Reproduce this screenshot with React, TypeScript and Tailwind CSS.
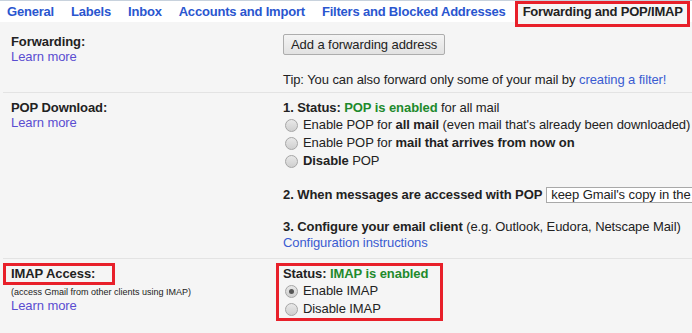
function Radio({ checked = false }: { checked?: boolean }) {
  return (
    <span className="relative mr-[5px] inline-block h-[13px] w-[13px] shrink-0 rounded-full border border-[#a6a6a6] bg-gradient-to-b from-[#e8e8e8] to-[#cfcfcf]">
      {checked && (
        <span className="absolute left-[3px] top-[3px] h-[5px] w-[5px] rounded-full bg-[#555555]" />
      )}
    </span>
  )
}

function LearnMore() {
  return <div className="h-[15px] leading-[15px] text-[#5a4dd1]">Learn more</div>
}

const tabs = ['General', 'Labels', 'Inbox', 'Accounts and Import', 'Filters and Blocked Addresses']

export default function App() {
  return (
    <div
      className="h-[333px] w-[692px] overflow-hidden bg-[#f5f5f5] text-[13px] tracking-[-0.08px] text-[#222222]"
      style={{ fontFamily: '"Liberation Sans", Arial, sans-serif' }}
    >
      {/* tab bar */}
      <div className="flex h-[22px] items-center border-t border-[#c8d2dd] bg-white tracking-[-0.2px]">
        <div className="ml-[7px] flex items-center gap-[17px] font-bold text-[#2a56cf]">
          {tabs.map((t) => (
            <span key={t} className="whitespace-nowrap">{t}</span>
          ))}
        </div>
        <div className="ml-[9px] box-border flex h-[26px] w-[175px] shrink-0 items-center self-start border-[3px] border-[#e8202a] bg-[#f5f5f5] pb-[5px] pl-[5px] font-bold whitespace-nowrap">
          Forwarding and POP/IMAP
        </div>
      </div>

      {/* forwarding */}
      <div className="ml-[3px] flex border-b border-[#e3e3e3] pt-[12px] pb-[5px]">
        <div className="w-[280px] shrink-0 pl-[8px]">
          <div className="h-[15px] leading-[15px] font-bold">Forwarding:</div>
          <LearnMore />
        </div>
        <div className="whitespace-nowrap">
          <button className="h-[21px] rounded-[2px] border border-[#adadad] bg-gradient-to-b from-[#f4f4f4] to-[#e2e2e2] px-[7px] text-[13px] leading-[19px] tracking-[-0.08px] text-[#222222]">
            Add a forwarding address
          </button>
          <div className="mt-[17px] h-[15px] leading-[15px]">
            Tip: You can also forward only some of your mail by{' '}
            <span className="text-[#3a5bd1]">creating a filter!</span>
          </div>
        </div>
      </div>

      {/* POP */}
      <div className="ml-[3px] flex border-b border-[#e3e3e3] pt-[7px] pb-[7px]">
        <div className="w-[280px] shrink-0 pl-[8px]">
          <div className="h-[15px] leading-[15px] font-bold">POP Download:</div>
          <LearnMore />
        </div>
        <div className="whitespace-nowrap">
          <div className="h-[16px] leading-[15px]">
            <b>1. Status: </b>
            <span className="font-bold text-[#1e8a2c]">POP is enabled</span> for all mail
          </div>
          <div className="flex h-[18px] items-center pl-[2px]">
            <Radio />
            <span>
              Enable POP for <b>all mail</b> (even mail that's already been downloaded)
            </span>
          </div>
          <div className="flex h-[18px] items-center pl-[2px]">
            <Radio />
            <span>
              Enable POP for <b>mail that arrives from now on</b>
            </span>
          </div>
          <div className="flex h-[18px] items-center pl-[2px]">
            <Radio />
            <span>
              <b>Disable</b> POP
            </span>
          </div>
          <div className="mt-[16px] flex h-[18px] items-center">
            <b>2. When messages are accessed with POP</b>
            <span className="ml-[4px] inline-block h-[16px] w-[160px] border border-[#a9a9a9] bg-white pl-[4px] leading-[14px]">
              keep Gmail's copy in the Inbox
            </span>
          </div>
          <div className="mt-[15px] h-[16px] leading-[16px]">
            <b>3. Configure your email client</b> (e.g. Outlook, Eudora, Netscape Mail)
          </div>
          <div className="h-[16px] leading-[16px] text-[#3a5bd1]">Configuration instructions</div>
        </div>
      </div>

      {/* IMAP */}
      <div className="ml-[3px] flex pt-[4px]">
        <div className="w-[280px] shrink-0">
          <div className="box-border flex h-[22px] w-[112px] items-center border-[3px] border-[#e8202a] pl-[5px] font-bold">
            IMAP Access:
          </div>
          <div className="mt-[2px] h-[11px] pl-[8px] text-[9px] leading-[11px] tracking-normal">
            (access Gmail from other clients using IMAP)
          </div>
          <div className="pl-[8px]">
            <LearnMore />
          </div>
        </div>
        <div className="-ml-[7px] box-border h-[58px] w-[167px] border-[3px] border-[#e8202a] pl-[4px] whitespace-nowrap">
          <div className="h-[16px] leading-[16px]">
            <b>Status: </b>
            <span className="font-bold text-[#1e8a2c]">IMAP is enabled</span>
          </div>
          <div className="flex h-[18px] items-center pl-[2px]">
            <Radio checked />
            <span>Enable IMAP</span>
          </div>
          <div className="flex h-[18px] items-center pl-[2px]">
            <Radio />
            <span>Disable IMAP</span>
          </div>
        </div>
      </div>
    </div>
  )
}
